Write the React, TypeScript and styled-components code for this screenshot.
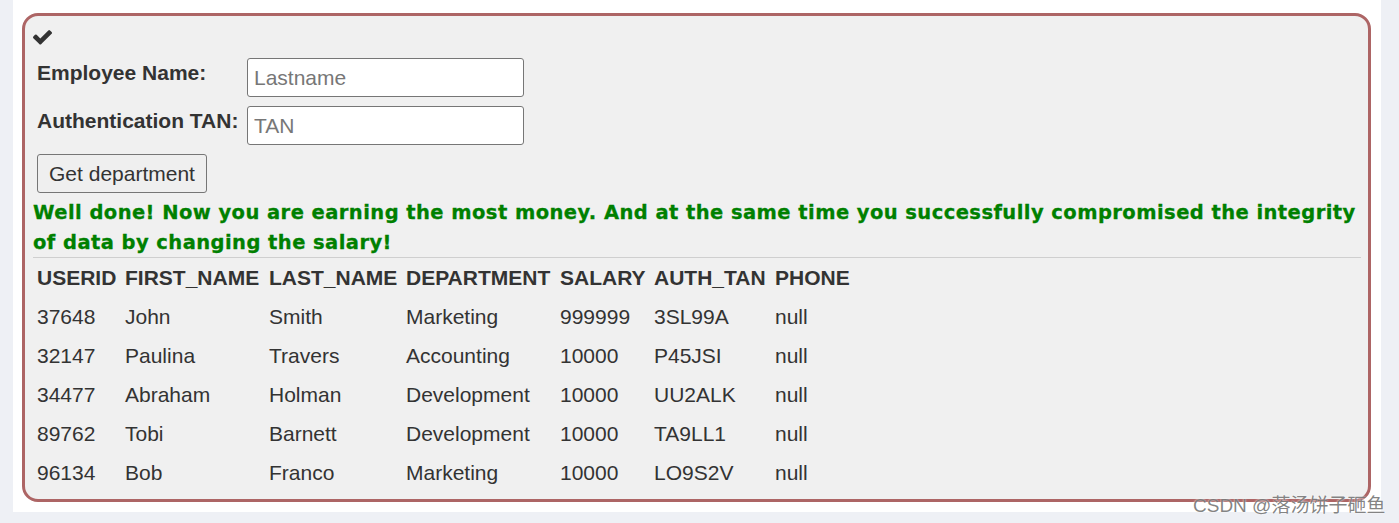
import React from 'react'
import styled, { createGlobalStyle } from 'styled-components'

const GlobalStyle = createGlobalStyle`
  html, body {
    margin: 0;
    padding: 0;
    background: #eef0f5;
  }
  body {
    font-family: 'Liberation Sans', Arial, sans-serif;
    color: #333;
  }
`

const Page = styled.div`
  position: relative;
  width: 1399px;
  height: 523px;
  overflow: hidden;
`

const Card = styled.div`
  margin-left: 13px;
  width: 1368px;
  height: 512px;
  background: #fff;
  padding: 13px 0 0 9px;
  box-sizing: border-box;
`

const Panel = styled.div`
  width: 1349px;
  height: 489px;
  box-sizing: border-box;
  border: 3px solid #ad6565;
  border-radius: 16px;
  background: #f0f0f0;
  padding: 8px 7px 0 8px;
`

const CheckRow = styled.div`
  height: 34px;
  box-sizing: border-box;
  padding-top: 6px;
`

const Form = styled.div`
  display: grid;
  grid-template-columns: 210px 277px;
  grid-auto-rows: 39px;
  row-gap: 9px;
  margin-left: 4px;
`

const Label = styled.label`
  font-size: 21px;
  font-weight: bold;
  line-height: 24px;
  padding-top: 3px;
  color: #333;
`

const Input = styled.input`
  box-sizing: border-box;
  width: 277px;
  height: 39px;
  border: 1px solid #767676;
  border-radius: 3px;
  background: #fff;
  padding: 0 6px;
  font-family: 'Liberation Sans', Arial, sans-serif;
  font-size: 21px;
  color: #333;
  &::placeholder {
    color: #777;
  }
`

const Button = styled.button`
  box-sizing: border-box;
  display: block;
  margin: 9px 0 0 4px;
  width: 170px;
  height: 39px;
  border: 1px solid #767676;
  border-radius: 3px;
  background: #efefef;
  font-family: 'Liberation Sans', Arial, sans-serif;
  font-size: 21px;
  color: #333;
  padding: 0;
`

const Message = styled.div`
  margin-top: 5px;
  font-family: 'DejaVu Sans', 'Liberation Sans', sans-serif;
  font-size: 19.5px;
  font-weight: bold;
  line-height: 29.5px;
  letter-spacing: 0.44px;
  color: #008000;
  -webkit-text-stroke: 0.3px #008000;
  border-bottom: 1px solid #cfcfcf;
`

const Table = styled.table`
  border-collapse: collapse;
  table-layout: fixed;
  font-size: 21px;
`

const Cell = styled.td<{ $head?: boolean }>`
  height: 39px;
  padding: 0 4px;
  font-weight: ${(p) => (p.$head ? 'bold' : 'normal')};
  color: #333;
  white-space: nowrap;
  vertical-align: middle;
`

const Watermark = styled.div`
  position: absolute;
  left: 1193px;
  top: 490px;
  font-family: 'Liberation Sans', 'Noto Sans CJK SC', sans-serif;
  font-size: 19px;
  color: rgba(110, 110, 110, 0.85);
  text-shadow: 0 0 2px #fff;
  white-space: nowrap;
`

const CheckIcon = () => (
  <svg width="19" height="15" viewBox="121 362 1550 1160" style={{ display: 'block' }}>
    <path
      fill="#333"
      d="M1671 566q0 40-28 68l-724 724-136 136q-28 28-68 28t-68-28l-136-136-362-362q-28-28-28-68t28-68l136-136q28-28 68-28t68 28l294 295 656-657q28-28 68-28t68 28l136 136q28 28 28 68z"
    />
  </svg>
)

const columns = [88, 144, 137, 154, 94, 121, 120]
const headers = ['USERID', 'FIRST_NAME', 'LAST_NAME', 'DEPARTMENT', 'SALARY', 'AUTH_TAN', 'PHONE']
const rows = [
  ['37648', 'John', 'Smith', 'Marketing', '999999', '3SL99A', 'null'],
  ['32147', 'Paulina', 'Travers', 'Accounting', '10000', 'P45JSI', 'null'],
  ['34477', 'Abraham', 'Holman', 'Development', '10000', 'UU2ALK', 'null'],
  ['89762', 'Tobi', 'Barnett', 'Development', '10000', 'TA9LL1', 'null'],
  ['96134', 'Bob', 'Franco', 'Marketing', '10000', 'LO9S2V', 'null'],
]

export default function App() {
  return (
    <Page>
      <GlobalStyle />
      <Card>
        <Panel>
          <CheckRow>
            <CheckIcon />
          </CheckRow>
          <Form>
            <Label>Employee Name:</Label>
            <Input placeholder="Lastname" />
            <Label>Authentication TAN:</Label>
            <Input placeholder="TAN" />
          </Form>
          <Button>Get department</Button>
          <Message>
            Well done! Now you are earning the most money. And at the same time you successfully
            compromised the integrity of data by changing the salary!
          </Message>
          <Table>
            <colgroup>
              {columns.map((w, i) => (
                <col key={i} style={{ width: w }} />
              ))}
            </colgroup>
            <tbody>
              <tr>
                {headers.map((h) => (
                  <Cell key={h} $head>
                    {h}
                  </Cell>
                ))}
              </tr>
              {rows.map((r) => (
                <tr key={r[0]}>
                  {r.map((c, i) => (
                    <Cell key={i}>{c}</Cell>
                  ))}
                </tr>
              ))}
            </tbody>
          </Table>
        </Panel>
      </Card>
      <Watermark>CSDN @落汤饼子砸鱼</Watermark>
    </Page>
  )
}
